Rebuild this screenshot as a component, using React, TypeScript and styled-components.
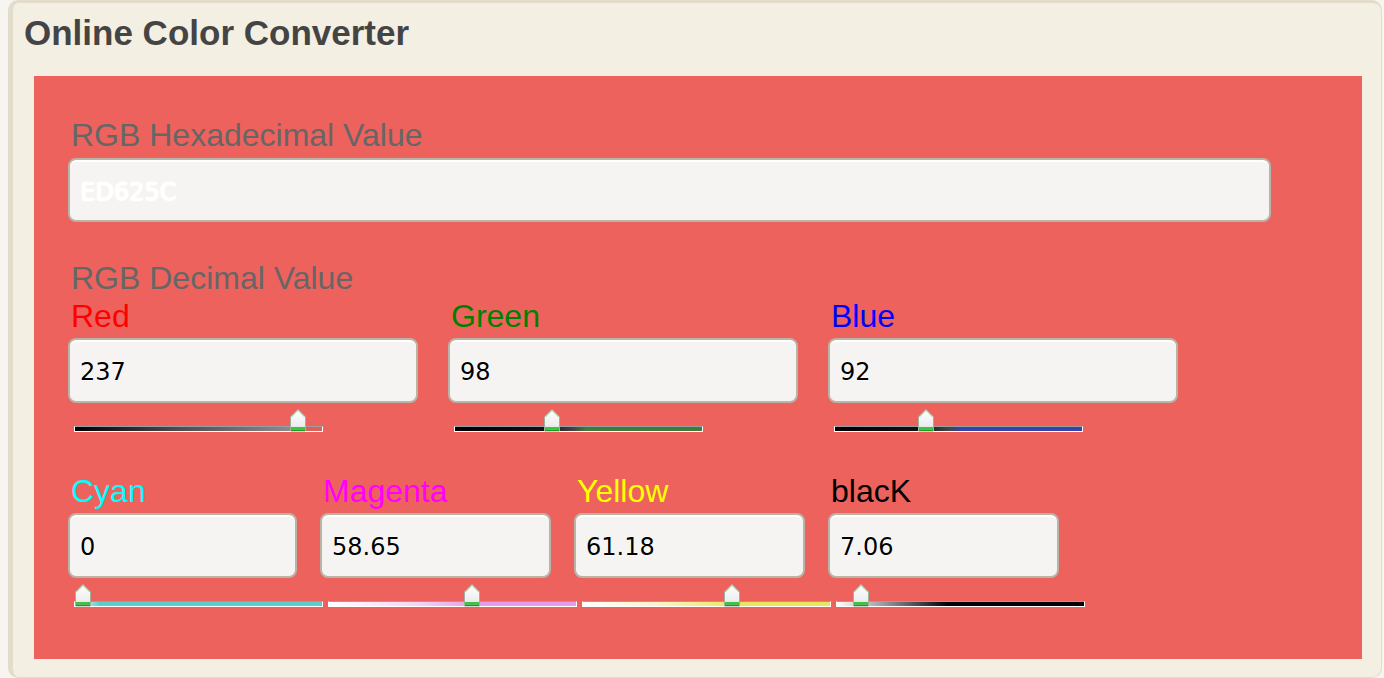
import React from "react";
import styled, { createGlobalStyle } from "styled-components";

const GlobalStyle = createGlobalStyle`
  html, body { margin: 0; padding: 0; background: #f7f5ef; }
  body { font-family: "Liberation Sans", Arial, sans-serif; }
  * { box-sizing: border-box; }
`;

const Panel = styled.section`
  margin-left: 8px;
  width: 1374px;
  height: 678px;
  background: #f3efe3;
  border-style: solid;
  border-color: #e3dccb;
  border-width: 3px 1px 1px 5px;
  border-radius: 10px;
  padding: 10px 19px 18px 21px;
  display: flex;
  flex-direction: column;
`;

const Title = styled.h1`
  margin: 0 0 0 -10px;
  font-family: "Liberation Sans", Arial, sans-serif;
  font-weight: bold;
  font-size: 35px;
  color: #444;
  line-height: 40px;
  height: 63px;
`;

const Converter = styled.div`
  background: #ed625c;
  flex: 1;
  padding: 42px 34px 0 34px;
  display: flex;
  flex-direction: column;
`;

const SectionLabel = styled.div<{ $gap?: number }>`
  font-size: 32px;
  line-height: 34px;
  color: #666;
  padding-left: 3px;
  margin-top: ${(p) => p.$gap ?? 0}px;
`;

const ChannelLabel = styled.div<{ $color: string }>`
  font-size: 32px;
  line-height: 34px;
  color: ${(p) => p.$color};
  padding-left: 3px;
`;

const Field = styled.input<{ $width: number; $hex?: boolean }>`
  display: block;
  width: ${(p) => p.$width}px;
  height: ${(p) => (p.$hex ? 64 : 65)}px;
  margin-top: ${(p) => (p.$hex ? 6 : 5)}px;
  border: 2px solid #bab3a7;
  border-radius: 8px;
  background: #f5f4f2;
  box-shadow: inset 0 2px 0 #fff;
  padding: 3px 10px 0 10px;
  font-family: "DejaVu Sans", Verdana, sans-serif;
  font-size: 24px;
  color: ${(p) => (p.$hex ? "#fff" : "#000")};
  text-shadow: ${(p) =>
    p.$hex
      ? "0 0 1px #fff, 0 0 1px #fff, 1px 0 0 #fff, 0 1px 1px #fff, 0 0 3px #fff"
      : "0 0 1px #fff, 0 0 2px #fff, 0 0 2px #fff"};
  outline: none;
`;

const RgbRow = styled.div`
  display: grid;
  grid-template-columns: 380px 380px 380px;
  margin-top: 4px;
`;

const Column = styled.div`
  display: flex;
  flex-direction: column;
`;

const CmykRow = styled.div`
  display: grid;
  grid-template-columns: 252px 254px 254px 254px;
  margin-top: 42px;
`;

const SliderRow = styled.div`
  display: flex;
  gap: 5px;
  padding-left: 6px;
`;

const SliderBox = styled.div<{ $inset?: number }>`
  position: relative;
  width: 249px;
  height: 24px;
  margin-top: 5px;
  margin-left: ${(p) => p.$inset ?? 0}px;
`;

const Track = styled.div<{ $bg: string }>`
  position: absolute;
  left: 0;
  right: 0;
  bottom: 0;
  height: 6px;
  border: 1px solid #fff;
  border-top-color: #9d9d9d;
  background: ${(p) => p.$bg};
`;

const Thumb = styled.svg`
  position: absolute;
  top: 0;
  width: 18px;
  height: 24px;
`;

function Slider({ value, max, bg, inset }: { value: number; max: number; bg: string; inset?: number }) {
  const left = (value / max) * 231;
  return (
    <SliderBox $inset={inset}>
      <Track $bg={bg} />
      <Thumb style={{ left }} viewBox="0 0 18 24">
        <defs>
          <linearGradient id="tg" x1="0" y1="0" x2="0" y2="1">
            <stop offset="0" stopColor="#ffffff" />
            <stop offset="0.7" stopColor="#efefef" />
            <stop offset="1" stopColor="#dcdcdc" />
          </linearGradient>
        </defs>
        <path
          d="M1.5 9 L9 1.5 L16.5 9 V23 H1.5 Z"
          fill="url(#tg)"
          stroke="#9fb09f"
          strokeWidth="1"
          strokeLinejoin="round"
        />
        <path d="M2.5 9 L9 2.5 L15.5 9" fill="none" stroke="#a6dca6" strokeWidth="1" strokeLinejoin="round" />
        <rect x="2" y="19" width="14" height="2.5" fill="#3ac43f" />
        <rect x="2" y="21.5" width="14" height="1.5" fill="#1f9a2a" />
      </Thumb>
    </SliderBox>
  );
}

const rgb = [
  { label: "Red", color: "#ff0000", value: 237, bg: "linear-gradient(90deg,#000 0%,#4a4a4a 40%,#8a8a8a 86%,#d8605a 92%,#e06058 100%)" },
  { label: "Green", color: "#008000", value: 98, bg: "linear-gradient(90deg,#000 0%,#111 36%,#444 48%,#3f7a3f 53%,#3f7a3f 100%)" },
  { label: "Blue", color: "#0000ff", value: 92, bg: "linear-gradient(90deg,#000 0%,#111 34%,#444 46%,#3344aa 51%,#3344aa 100%)" },
];

const cmyk = [
  { label: "Cyan", color: "#00ffff", value: "0", num: 0, width: 229, bg: "linear-gradient(90deg,#fff 0%,#5ccccc 10%,#5ccccc 100%)" },
  { label: "Magenta", color: "#ff00ff", value: "58.65", num: 58.65, width: 231, bg: "linear-gradient(90deg,#fff 0%,#f2d6f5 35%,#e59ce9 60%,#e59ce9 100%)" },
  { label: "Yellow", color: "#ffff00", value: "61.18", num: 61.18, width: 231, bg: "linear-gradient(90deg,#fff 0%,#f6f6c8 30%,#e8e75c 62%,#e8e75c 100%)" },
  { label: "blacK", color: "#000000", value: "7.06", num: 7.06, width: 231, bg: "linear-gradient(90deg,#fff 0%,#a0a0a0 18%,#000 45%,#000 100%)" },
];

export default function App() {
  return (
    <>
      <GlobalStyle />
      <Panel>
        <Title>Online Color Converter</Title>
        <Converter>
          <SectionLabel>RGB Hexadecimal Value</SectionLabel>
          <Field $hex $width={1203} defaultValue="ED625C" />
          <SectionLabel $gap={39}>RGB Decimal Value</SectionLabel>
          <RgbRow>
            {rgb.map((c) => (
              <Column key={c.label}>
                <ChannelLabel $color={c.color}>{c.label}</ChannelLabel>
                <Field $width={350} defaultValue={String(c.value)} />
                <Slider value={c.value} max={255} bg={c.bg} inset={6} />
              </Column>
            ))}
          </RgbRow>
          <CmykRow>
            {cmyk.map((c) => (
              <Column key={c.label}>
                <ChannelLabel $color={c.color}>{c.label}</ChannelLabel>
                <Field $width={c.width} defaultValue={c.value} />
              </Column>
            ))}
          </CmykRow>
          <SliderRow>
            {cmyk.map((c) => (
              <Slider key={c.label} value={c.num} max={100} bg={c.bg} />
            ))}
          </SliderRow>
        </Converter>
      </Panel>
    </>
  );
}
